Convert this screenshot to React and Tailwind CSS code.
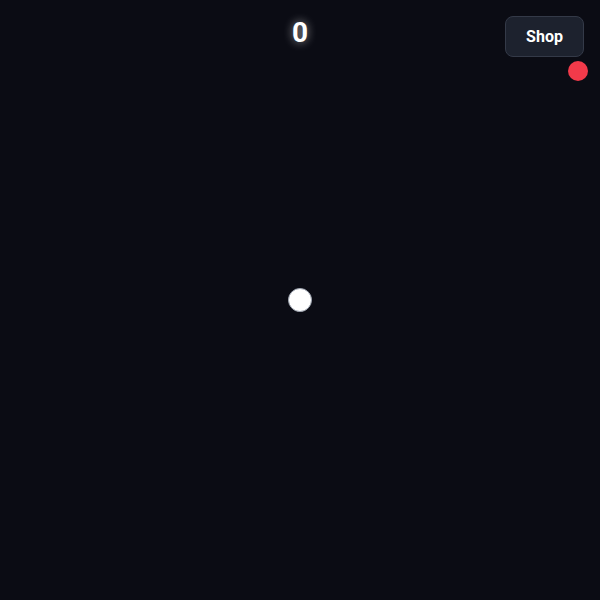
export default function App() {
  return (
    <div
      className="relative w-full h-[600px] overflow-hidden bg-[#0b0c14] text-white"
      style={{ fontFamily: 'Roboto, "Liberation Sans", sans-serif' }}
    >
      {/* score */}
      <div className="flex justify-center pt-[19px]">
        <span className="text-[28px] font-bold leading-none [text-shadow:0_0_10px_rgba(255,255,255,0.6)]">0</span>
      </div>

      {/* shop button */}
      <button className="absolute top-4 right-4 w-[79px] h-[41px] rounded-lg bg-[#1d222e] border border-[#343a48] text-[16px] font-bold">
        Shop
      </button>

      {/* enemy */}
      <div className="absolute left-[568px] top-[61px] w-5 h-5 rounded-full bg-[#f23a4a]" />

      {/* player */}
      <div className="absolute left-[288px] top-[288px] w-6 h-6 rounded-full bg-white border border-[#9ca3af]" />
    </div>
  )
}
